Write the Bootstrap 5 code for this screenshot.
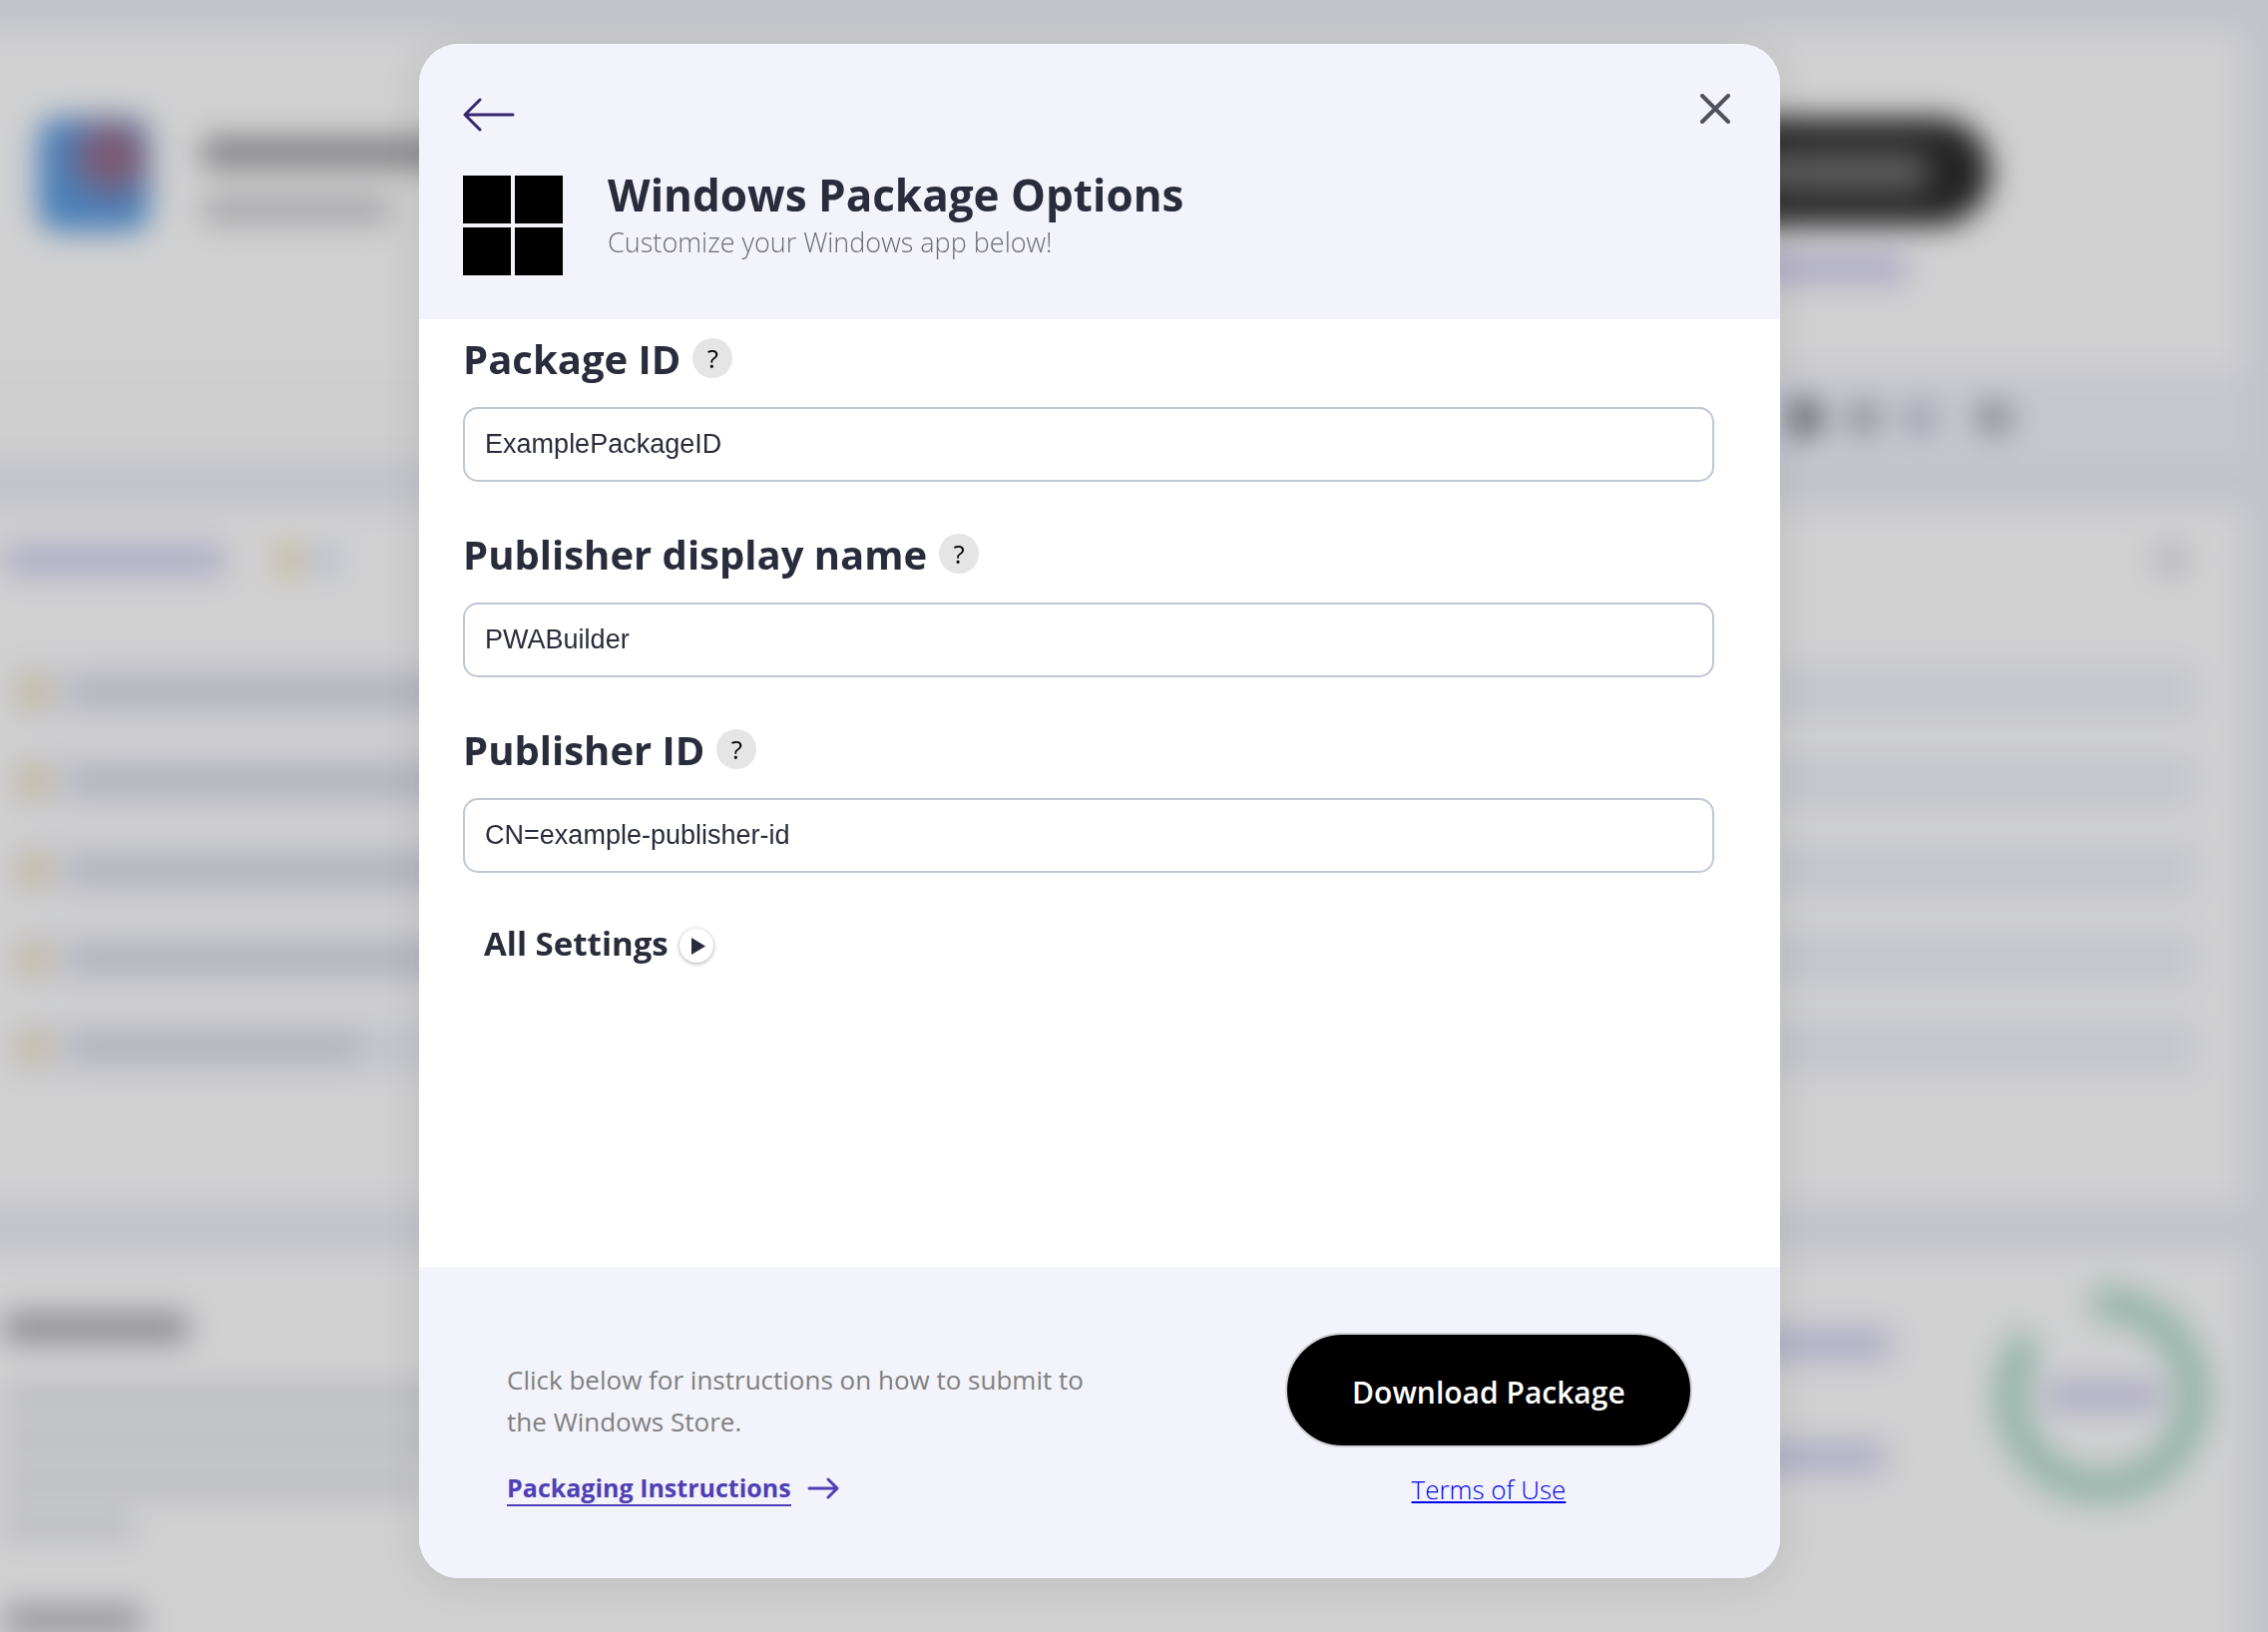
<!DOCTYPE html>
<html lang="en">
<head>
<meta charset="utf-8">
<meta name="viewport" content="width=device-width, initial-scale=1">
<title>Windows Package Options</title>
<link href="https://cdn.jsdelivr.net/npm/bootstrap@5.3.0/dist/css/bootstrap.min.css" rel="stylesheet">
<style>
  :root { --ink: #292c3a; --muted: #808080; --brand: #4f3fb6; --panel: #f2f3fb; }
  body { font-family: "Open Sans", "Noto Sans", sans-serif; color: var(--ink); background: #c4c5cb; }

  /* report page, blurred under the dialog; it bleeds 48px past the window so the blur has no hard edge */
  .backdrop-page { inset: -48px; gap: 46px; padding: 80px 72px 0 0; background: #c3c4cb; filter: blur(15px); }
  .report { background: #d0d0d1; border-radius: 0 16px 16px 0; }
  .bar { border-radius: 8px; height: 30px; background: #aeacc5; }
  .dot { border-radius: 50%; flex: none; }
  .summary { height: 430px; }
  .summary-top { height: 340px; padding: 86px 254px 0 86px; gap: 52px; }
  .app-icon { width: 112px; height: 114px; border-radius: 20px; background: radial-gradient(circle at 66% 34%, #80586f 0 16%, #4a80b9 50%); }
  .app-name { width: 280px; height: 30px; background: #808082; }
  .app-link { width: 190px; height: 28px; background: #a6a6a8; }
  .store-pill { width: 420px; height: 108px; border-radius: 54px; background: #242424; padding: 34px 64px; }
  .store-pill .bar { height: 40px; background: #5c5c5c; }
  .store-link { width: 340px; background: #aeaac5; height: 30px; margin-right: 84px; }
  .share { height: 90px; gap: 26px; padding-right: 228px; background: linear-gradient(90deg, #cecece 50%, #c6c6cf 80%); }
  .items { height: 700px; padding: 36px 48px 0 48px; }
  .items-head { margin-bottom: 89px; padding-left: 4px; }
  .item-row { height: 54px; margin-left: 10px; border-radius: 8px; background: #c5c6cd; padding-left: 8px; gap: 20px; }
  .item-row .bar { width: 400px; height: 26px; background: #b0b0bb; }
  .item-row:last-child .bar { width: 292px; }
  .warn { width: 32px; height: 32px; background: #c5b998; }
  .manifest { height: 480px; padding: 30px 26px 0 52px; }
  .para { height: 24px; background: #b9babe; }
  .links { gap: 84px; padding-top: 48px; margin-right: 98px; }

  .overlay { padding: 44px 69px 0 0; }
  .package-dialog { width: 60vw; height: 94vh; border-radius: 40px; background: #fff; overflow: hidden; box-shadow: 0 4px 44px rgba(0,0,0,.09); }
  .dialog-top { background: var(--panel); height: 276px; padding: 50px 44px 0; }
  .dialog-tools { margin-bottom: 44px; }
  .dialog-name { margin-left: 45px; }
  .icon-btn { border: 0; padding: 0; background: none; line-height: 0; }
  .title { font-size: 44px; line-height: 38px; font-weight: 700; }
  .subtitle { font-size: 27px; line-height: 58px; font-weight: 300; color: #6c6c70; }
  .dialog-form { padding: 16px 66px 0 44px; }
  .field { height: 196px; }
  .field label { font-size: 40px; line-height: 48px; font-weight: 700; }
  .field-head { height: 48px; gap: 12px; margin-bottom: 24px; }
  .tip { width: 40px; height: 40px; border: 0; border-radius: 50%; background: #e5e5e5; color: #000; font: 26px/40px "Open Sans", sans-serif; padding: 0; margin-bottom: 2px; }
  .field input { height: 75px; border: 2px solid #c0c7d3; border-radius: 15px; padding: 0 20px; font: 27px "Liberation Sans", Arial, sans-serif; color: var(--ink); }
  .all-settings { border: 0; background: none; padding: 0; margin-left: 21px; gap: 11px; font-size: 33px; line-height: 44px; font-weight: 700; color: var(--ink); }
  .play { width: 34px; height: 34px; border-radius: 50%; background: #fff; box-shadow: 0 1px 4px rgba(0,0,0,.35); margin-top: 4px; }
  .dialog-foot { background: var(--panel); height: 312px; padding: 66px 88px 0 88px; }
  .how-to { width: 600px; font-size: 26px; line-height: 42px; color: var(--muted); padding-top: 26px; margin-bottom: 28px; }
  .guide { font-size: 25px; line-height: 34px; font-weight: 700; color: var(--brand); gap: 16px; }
  .guide span { border-bottom: 2px solid; }
  .guide, .guide:hover { text-decoration: none; }
  .download { width: 408px; height: 115px; border: 2px solid #d2d2d6; border-radius: 58px; background: #000; color: #fff; font-size: 30px; font-weight: 600; padding: 4px 0 0; }
  .terms { font-size: 26px; line-height: 36px; font-weight: 300; color: #0000ee; }
</style>
</head>
<body class="vh-100 overflow-hidden">
<div class="backdrop-page position-fixed d-flex flex-column overflow-hidden" aria-hidden="true">
  <div class="report summary flex-shrink-0">
    <div class="summary-top d-flex align-items-start">
      <div class="app-icon"></div>
      <div class="d-flex flex-column gap-4 pt-3"><div class="bar app-name mt-1"></div><div class="bar app-link mt-1"></div></div>
      <div class="ms-auto d-flex flex-column align-items-end gap-4"><div class="store-pill"><div class="bar"></div></div><div class="bar store-link mt-1"></div></div>
    </div>
    <div class="share d-flex align-items-center justify-content-end">
      <svg class="mt-1" width="236" height="44" viewBox="0 0 236 44"><rect x="8" y="4" width="32" height="36" rx="8" fill="#646569"/><rect x="68" y="7" width="30" height="30" rx="8" fill="#88898e"/><rect x="126" y="8" width="26" height="28" rx="6" fill="#9495a1"/><rect x="194" y="5" width="38" height="34" rx="16" fill="#8b8c91"/></svg>
    </div>
  </div>
  <div class="report items flex-shrink-0 d-flex flex-column">
    <div class="items-head d-flex align-items-center">
      <div class="bar" style="width:222px"></div>
      <div class="dot warn ms-5"></div>
      <svg class="d-block ms-2" width="24" height="24"><circle cx="12" cy="12" r="12" fill="#aab2cd"/></svg>
      <svg class="d-block ms-auto me-2" width="34" height="34"><circle cx="17" cy="17" r="16" fill="#b2b2b7"/></svg>
    </div>
    <div class="d-flex flex-column" style="gap:35px">
      <div class="item-row d-flex align-items-center"><div class="dot warn"></div><div class="bar"></div></div>
      <div class="item-row d-flex align-items-center"><div class="dot warn"></div><div class="bar"></div></div>
      <div class="item-row d-flex align-items-center"><div class="dot warn"></div><div class="bar"></div></div>
      <div class="item-row d-flex align-items-center"><div class="dot warn"></div><div class="bar"></div></div>
      <div class="item-row d-flex align-items-center"><div class="dot warn"></div><div class="bar"></div></div>
    </div>
  </div>
  <div class="report manifest flex-shrink-0 d-flex align-items-start">
    <div class="d-flex flex-column pt-4" style="gap:19px">
      <div class="bar mb-4 mt-2" style="width:184px; background:#8c8c92"></div>
      <div class="para" style="width:480px"></div>
      <div class="para" style="width:480px"></div>
      <div class="para" style="width:420px"></div>
      <div class="para" style="width:130px"></div>
      <div class="bar mt-5" style="width:138px; background:#98989d"></div>
    </div>
    <div class="links ms-auto d-flex flex-column"><div class="bar" style="width:260px"></div><div class="bar" style="width:254px"></div></div>
    <svg width="230" height="230" viewBox="-115 -115 230 230"><path d="M-10 -92A92 92 0 1 1 -74 -57" fill="none" stroke="#96b5a9" stroke-width="35"/><rect x="-58" y="-15" width="116" height="30" rx="8" fill="#aeacc5"/></svg>
  </div>
</div>

<div class="overlay position-relative vh-100 d-flex justify-content-center">
  <section class="package-dialog d-flex flex-column" role="dialog" aria-modal="true" aria-labelledby="dialog-title">
    <header class="dialog-top">
      <div class="dialog-tools d-flex justify-content-between align-items-start">
        <button class="icon-btn" type="button" aria-label="Back">
          <svg class="mt-1" width="52" height="34" viewBox="0 0 52 34" fill="none" stroke="#36266f" stroke-width="3" stroke-linecap="round" stroke-linejoin="round"><path d="M50 17H2M17 2L2 17L17 32"/></svg>
        </button>
        <button class="icon-btn me-1" type="button" aria-label="Close">
          <svg width="34" height="30" viewBox="0 0 34 30" fill="none" stroke="#50515b" stroke-width="4" stroke-linecap="round"><path d="M4 2L30 28M30 2L4 28"/></svg>
        </button>
      </div>
      <div class="d-flex">
        <svg class="flex-shrink-0" width="100" height="100" viewBox="0 0 100 100"><path d="M0 0H48V48H0ZM52 0H100V48H52ZM0 52H48V100H0ZM52 52H100V100H52Z"/></svg>
        <div class="dialog-name">
          <h1 class="title m-0" id="dialog-title">Windows Package Options</h1>
          <p class="subtitle m-0">Customize your Windows app below!</p>
        </div>
      </div>
    </header>
    <form class="dialog-form flex-grow-1">
      <div class="field">
        <div class="field-head d-flex align-items-center"><label for="package-id">Package ID</label><button class="tip" type="button" aria-label="About the package ID">?</button></div>
        <input class="w-100 d-block" id="package-id" type="text" value="ExamplePackageID">
      </div>
      <div class="field">
        <div class="field-head d-flex align-items-center"><label for="display-name">Publisher display name</label><button class="tip" type="button" aria-label="About the publisher display name">?</button></div>
        <input class="w-100 d-block" id="display-name" type="text" value="PWABuilder">
      </div>
      <div class="field">
        <div class="field-head d-flex align-items-center"><label for="publisher-id">Publisher ID</label><button class="tip" type="button" aria-label="About the publisher ID">?</button></div>
        <input class="w-100 d-block" id="publisher-id" type="text" value="CN=example-publisher-id">
      </div>
      <button class="all-settings d-flex align-items-center" type="button" aria-expanded="false">All Settings
        <svg class="play" viewBox="0 0 34 34" aria-hidden="true"><path d="M12 9V26L26 17.500Z" fill="#292c3a"/></svg>
      </button>
    </form>
    <footer class="dialog-foot d-flex justify-content-between align-items-start">
      <div>
        <p class="how-to">Click below for instructions on how to submit to the Windows Store.</p>
        <a class="guide d-inline-flex align-items-center" href="#guide"><span>Packaging Instructions</span>
          <svg width="32" height="24" viewBox="0 0 32 24" fill="none" stroke="currentColor" stroke-width="3" stroke-linecap="round" stroke-linejoin="round"><path d="M2 12H30M21 3L30 12L21 21"/></svg></a>
      </div>
      <div class="d-flex flex-column align-items-center gap-4">
        <button class="download" type="button">Download Package</button>
        <a class="terms" href="#terms">Terms of Use</a>
      </div>
    </footer>
  </section>
</div>
<script src="https://cdn.jsdelivr.net/npm/bootstrap@5.3.0/dist/js/bootstrap.bundle.min.js"></script>
</body>
</html>
